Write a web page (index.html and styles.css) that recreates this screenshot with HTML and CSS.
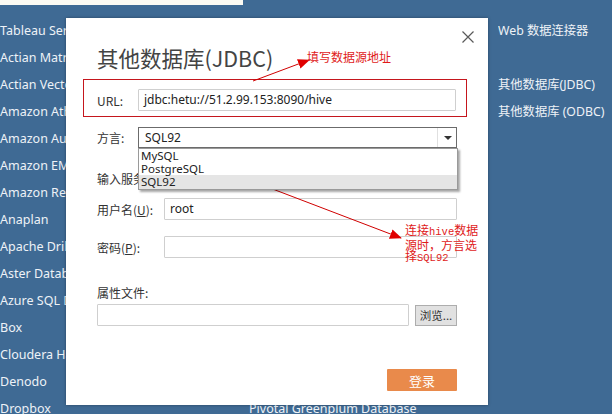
FILE: index.html
```html
<!DOCTYPE html>
<html lang="zh">
<head>
<meta charset="utf-8">
<title>其他数据库(JDBC)</title>
<link rel="stylesheet" href="styles.css">
</head>
<body>
<div class="strip"></div>
<div class="cols">
  <ul class="col col-left">
    <li>Tableau Server</li>
    <li>Actian Matrix</li>
    <li>Actian Vector</li>
    <li>Amazon Athena</li>
    <li>Amazon Aurora</li>
    <li>Amazon EMR</li>
    <li>Amazon Redshift</li>
    <li>Anaplan</li>
    <li>Apache Drill</li>
    <li>Aster Database</li>
    <li>Azure SQL Database</li>
    <li>Box</li>
    <li>Cloudera Hadoop</li>
    <li>Denodo</li>
    <li>Dropbox</li>
  </ul>
  <ul class="col col-mid">
    <li>Exasol</li>
    <li>Firebird</li>
    <li>Google Analytics</li>
    <li>Google BigQuery</li>
    <li>Google Cloud SQL</li>
    <li>Google Sheets</li>
    <li>Hortonworks Hadoop Hive</li>
    <li>HP Vertica</li>
    <li>IBM BigInsights</li>
    <li>IBM DB2</li>
    <li>Impala</li>
    <li>Kognitio</li>
    <li>MapR Hadoop Hive</li>
    <li>Oracle</li>
    <li>Pivotal Greenplum Database</li>
  </ul>
  <ul class="col col-right">
    <li>Web 数据连接器</li>
    <li class="empty"></li>
    <li>其他数据库(JDBC)</li>
    <li>其他数据库 (ODBC)</li>
  </ul>
</div>

<div class="dialog">
  <button class="close" aria-label="关闭">
    <svg width="12" height="12" viewBox="0 0 12 12"><path d="M0.5 0.5 L11.5 11.5 M11.5 0.5 L0.5 11.5" stroke="#5a5a5a" stroke-width="1.2" fill="none"/></svg>
  </button>
  <h1 class="title">其他数据库(JDBC)</h1>
  <div class="hl-box">
    <div class="row">
      <label class="lbl lbl-s">URL:</label>
      <div class="input">jdbc:hetu://51.2.99.153:8090/hive</div>
    </div>
  </div>
  <div class="row row-dialect">
    <label class="lbl lbl-s">方言:</label>
    <div class="select">
      <span class="sel-val">SQL92</span>
      <span class="caret"></span>
      <ul class="options">
        <li>MySQL</li>
        <li>PostgreSQL</li>
        <li class="selected">SQL92</li>
      </ul>
    </div>
  </div>
  <div class="row row-server">
    <label class="lbl lbl-w">输入服务器:</label>
  </div>
  <div class="row row-user">
    <label class="lbl lbl-w">用户名(<u>U</u>):</label>
    <div class="input">root</div>
  </div>
  <div class="row row-pass">
    <label class="lbl lbl-w">密码(<u>P</u>):</label>
    <div class="input"></div>
  </div>
  <div class="lbl prop">属性文件:</div>
  <div class="row row-file">
    <div class="input"></div>
    <button class="browse">浏览...</button>
  </div>
  <div class="actions">
    <button class="login">登录</button>
  </div>
</div>

<svg class="arrows" width="612" height="414" viewBox="0 0 612 414">
  <defs>
    <marker id="head" markerWidth="12" markerHeight="10" refX="11" refY="5" orient="auto" markerUnits="userSpaceOnUse">
      <path d="M0 0 L12 5 L0 10 Z" fill="#e00000"/>
    </marker>
  </defs>
  <line x1="253" y1="81" x2="309" y2="60" stroke="#d00000" stroke-width="1" marker-end="url(#head)"/>
  <line x1="270" y1="188" x2="401" y2="238" stroke="#d00000" stroke-width="1" marker-end="url(#head)"/>
</svg>
<div class="note note1">填写数据源地址</div>
<div class="note note2">连接<span class="mono">hive</span>数据<br>源时，方言选<br>择<span class="mono">SQL92</span></div>
</body>
</html>
```

FILE: styles.css
```css
* { box-sizing: border-box; }
html, body { margin: 0; padding: 0; }
body {
  width: 612px;
  height: 414px;
  overflow: hidden;
  background: #3f6a94;
  font-family: "Noto Sans", "Noto Sans CJK SC", sans-serif;
  position: relative;
}
.strip {
  width: 243px;
  height: 5px;
  background: #fbfaf3;
}
.cols {
  display: grid;
  grid-template-columns: 249px 249px 114px;
  padding-top: 12px;
}
.col {
  list-style: none;
  margin: 0;
  padding: 0;
  overflow: hidden;
  white-space: nowrap;
}
.col li {
  height: 27px;
  line-height: 27px;
  font-size: 12.5px;
  color: #eef2f7;
}
.col-right li {
  font-family: "Noto Sans", "Noto Sans CJK SC", sans-serif;
  font-size: 12.3px;
}

/* dialog */
.dialog {
  position: absolute;
  left: 66px;
  top: 18px;
  width: 422px;
  height: 387px;
  background: #ffffff;
  box-shadow: 0 0 3px rgba(0, 0, 0, 0.35);
  padding: 0 31px;
  font-family: "Noto Sans CJK SC", "Noto Sans", sans-serif;
  color: #333;
}
.close {
  position: absolute;
  right: 14px;
  top: 13px;
  width: 12px;
  height: 12px;
  padding: 0;
  border: 0;
  background: none;
  display: block;
}
.close svg { display: block; }
.title {
  margin: 25px 0 0;
  height: 30px;
  line-height: 30px;
  font-size: 21.5px;
  font-weight: normal;
  color: #444;
}
.hl-box {
  margin: 6px -10px 0 -14px;
  border: 1px solid #c5161d;
  padding: 9px 10px 5px 13px;
}
.row {
  display: flex;
  align-items: center;
  height: 22px;
}
.lbl {
  font-size: 12px;
  color: #333;
  flex: none;
}
.lbl-s { width: 41px; }
.lbl-w { width: 67px; }
.lbl u { text-decoration: underline; text-underline-offset: 1px; }
.input {
  flex: 1;
  height: 22px;
  border: 1px solid #cfcfcf;
  border-radius: 1px;
  padding-left: 5px;
  font-family: "Noto Sans", "Noto Sans CJK SC", sans-serif;
  font-size: 12px;
  line-height: 20px;
  color: #222;
}
.row-dialect { margin-top: 10px; height: 21px; }
.select {
  position: relative;
  flex: 1;
  height: 21px;
  border: 1px solid #6b6b6b;
  display: flex;
  align-items: center;
}
.sel-val {
  flex: 1;
  padding-left: 6px;
  font-family: "Noto Sans", sans-serif;
  font-size: 12px;
  color: #222;
}
.caret {
  width: 19px;
  height: 100%;
  border-left: 1px solid #e0e0e0;
  position: relative;
}
.caret::after {
  content: "";
  position: absolute;
  left: 6px;
  top: 8px;
  border-left: 4px solid transparent;
  border-right: 4px solid transparent;
  border-top: 4px solid #333;
}
.options {
  position: absolute;
  left: -1px;
  right: -2px;
  top: 20px;
  margin: 0;
  padding: 0;
  list-style: none;
  background: #fff;
  border: 1px solid #9a9a9a;
  box-shadow: 2px 2px 2px rgba(0, 0, 0, 0.35);
  z-index: 2;
}
.options li {
  height: 13px;
  line-height: 13px;
  padding-left: 2px;
  font-family: "Noto Sans", sans-serif;
  font-size: 11.5px;
  color: #222;
}
.options li.selected {
  height: 14px;
  background: #e5e5e5;
}
.row-server { margin-top: 19px; }
.row-user { margin-top: 9px; }
.row-pass { margin-top: 16px; }
.prop {
  margin-top: 26px;
  height: 18px;
  line-height: 18px;
}
.row-file { margin-top: 2px; gap: 6px; }
.browse {
  flex: none;
  width: 42px;
  height: 21px;
  padding: 0;
  border: 1px solid #adadad;
  background: #e1e1e1;
  font-family: "Noto Sans CJK SC", sans-serif;
  font-size: 11.5px;
  color: #333;
}
.actions {
  margin-top: 43px;
  display: flex;
  justify-content: flex-end;
}
.login {
  width: 70px;
  height: 22px;
  padding: 0;
  border: 0;
  border-radius: 1px;
  background: #e98a4b;
  color: #fff;
  font-family: "Noto Sans CJK SC", sans-serif;
  font-size: 13px;
}

/* annotations */
.arrows {
  position: absolute;
  left: 0;
  top: 0;
  pointer-events: none;
}
.note {
  position: absolute;
  color: #e01a1a;
  font-family: "Noto Sans CJK SC", sans-serif;
  white-space: nowrap;
}
.note1 {
  left: 307px;
  top: 49px;
  font-size: 12px;
  line-height: 16px;
}
.note2 {
  left: 405px;
  top: 224px;
  font-size: 12px;
  line-height: 11.5px;
}
.mono {
  font-family: "Liberation Mono", monospace;
  font-size: 10.5px;
}
```
